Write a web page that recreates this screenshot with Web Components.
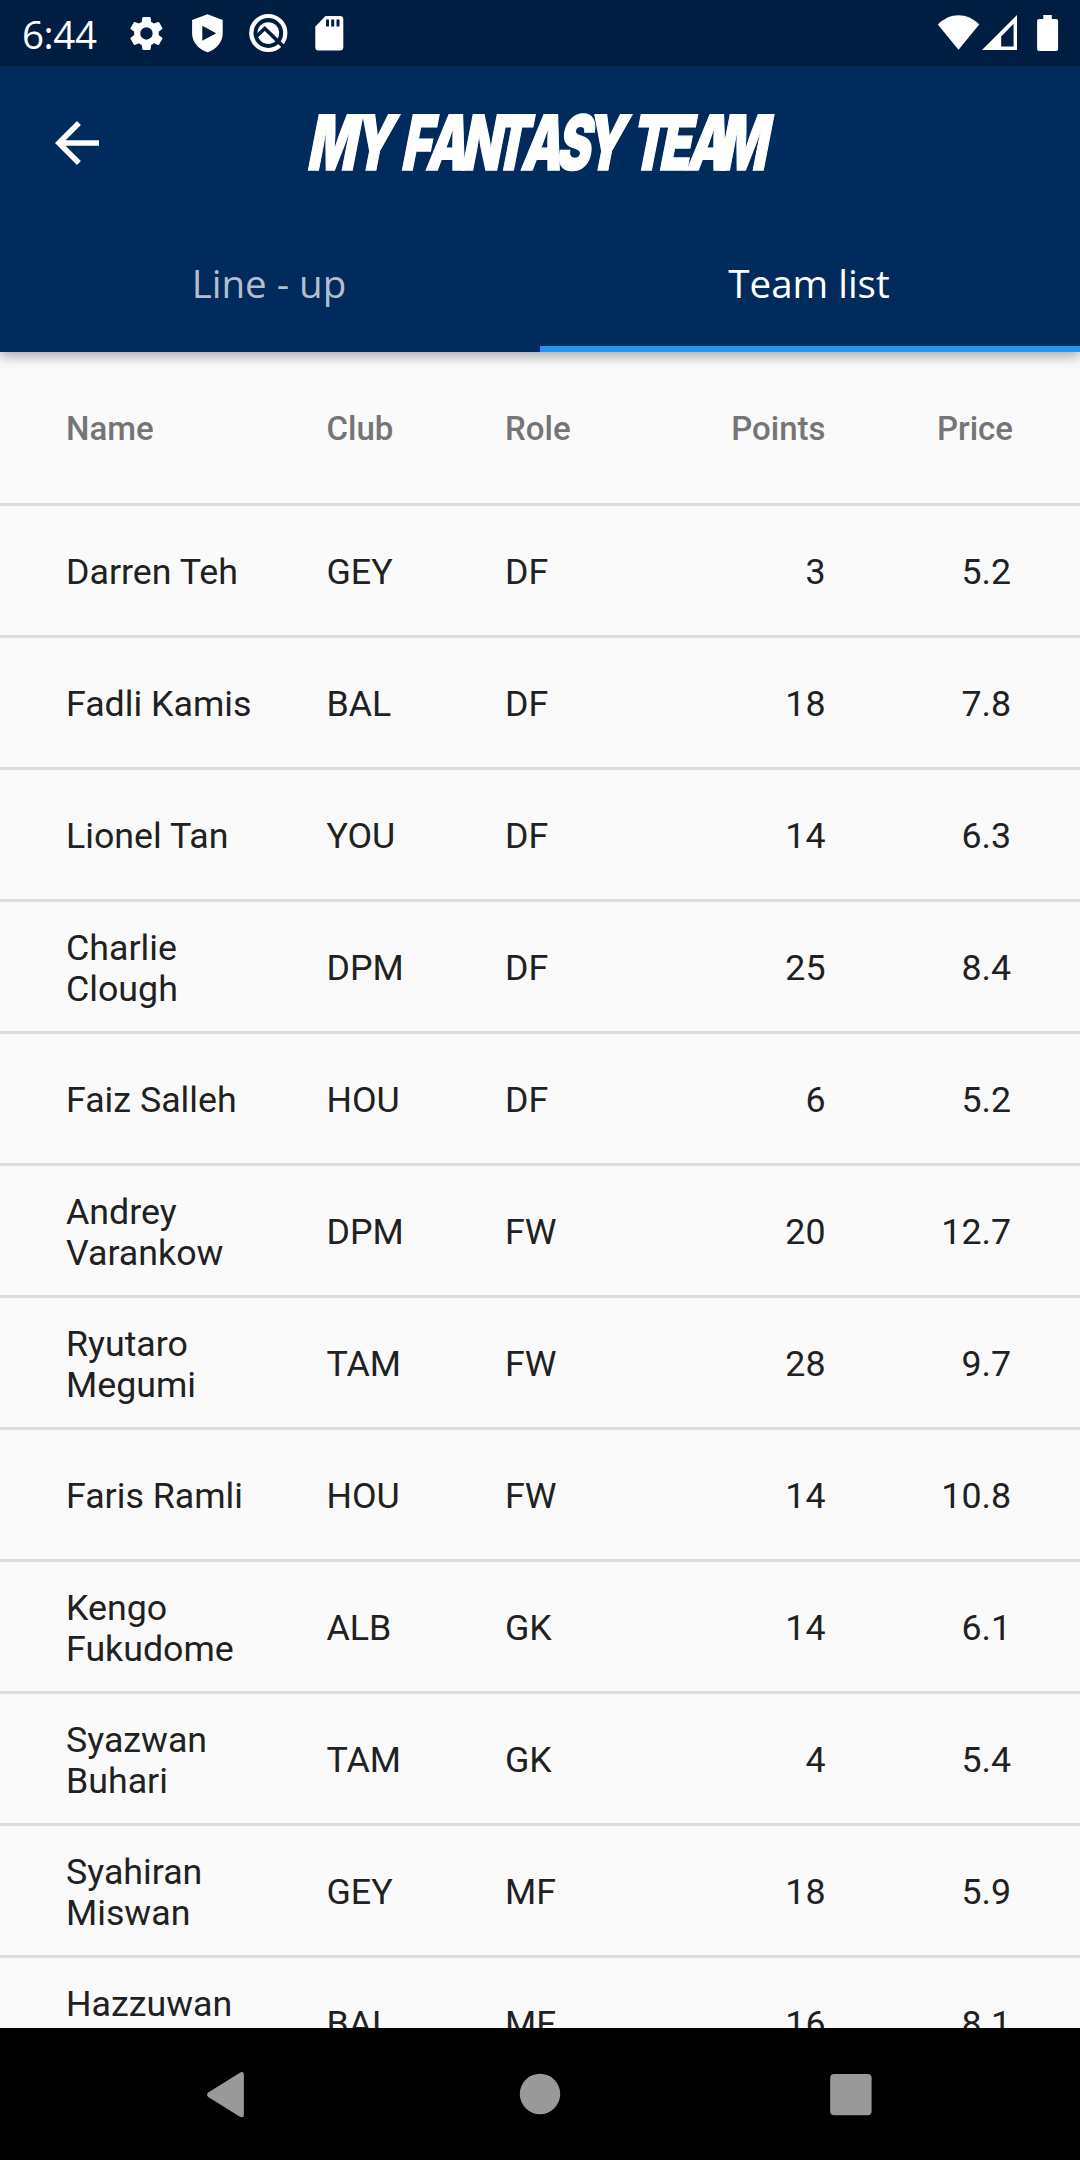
<!DOCTYPE html>
<html lang="en">
<head>
<meta charset="utf-8">
<title>My Fantasy Team</title>
<style>
html,body{margin:0;background:#000}
body{width:1080px;height:2160px;overflow:hidden}
</style>
</head>
<body>
<fantasy-app></fantasy-app>
<script>
function define(name, html, after) {
  const t = document.createElement('template');
  t.innerHTML = html;
  customElements.define(name, class extends HTMLElement {
    constructor() {
      super();
      this.attachShadow({mode: 'open'}).append(t.content.cloneNode(true));
    }
    connectedCallback() { if (after) after(this, this.shadowRoot); }
  });
}

define('status-bar', `
<style>
:host{display:flex;height:66px;background:#001e42;color:#fff;align-items:flex-start;box-sizing:border-box;padding:0 20px 0 22px}
.time{font:38.5px/68px "Open Sans",sans-serif;letter-spacing:-.4px;width:106px;white-space:nowrap}
svg{display:block;height:66px;fill:#fff;flex:none}
.gap{flex:1}
</style>
<span class="time">6:44</span>
<svg width="60" viewBox="128 0 60 66"><path transform="translate(125.8 12.8) scale(1.72)" d="M19.14 12.94c.04-.3.06-.61.06-.94s-.02-.64-.07-.94l2.03-1.58a.49.49 0 0 0 .12-.61l-1.92-3.32a.49.49 0 0 0-.59-.22l-2.39.96a7 7 0 0 0-1.62-.94l-.36-2.54a.48.48 0 0 0-.48-.41h-3.84a.48.48 0 0 0-.47.41l-.36 2.54c-.59.24-1.13.57-1.62.94l-2.39-.96a.48.48 0 0 0-.59.22L2.74 8.87a.48.48 0 0 0 .12.61l2.03 1.58a5.8 5.8 0 0 0 0 1.88l-2.03 1.58a.49.49 0 0 0-.12.61l1.92 3.32c.12.22.37.29.59.22l2.39-.96c.5.38 1.03.7 1.62.94l.36 2.54c.05.24.24.41.48.41h3.84c.24 0 .44-.17.47-.41l.36-2.54a7 7 0 0 0 1.62-.94l2.39.96c.22.08.47 0 .59-.22l1.92-3.32a.48.48 0 0 0-.12-.61zM12 15.6a3.6 3.6 0 1 1 0-7.2 3.6 3.6 0 0 1 0 7.2z"/></svg>
<svg width="60" viewBox="188 0 60 66"><path fill-rule="evenodd" d="M207.5 14.3 222.7 20v13.5c0 8.5-6 15.5-15.2 18.8-9.2-3.3-15.4-10.3-15.4-18.8V20zM202.3 25.8v15L216.2 33.3z"/></svg>
<svg width="60" viewBox="248 0 60 66"><circle cx="268.3" cy="33" r="17" fill="none" stroke="#fff" stroke-width="4.2"/><circle cx="268.3" cy="33" r="10.8"/><path d="M256.5 36.3 264.8 28.4 284.5 47.6" fill="none" stroke="#001e42" stroke-width="3.6"/><path d="M259.4 38.6l5.4-5.4 8.8 8.8c-5.2 3-12 1.4-14.2-3.4z"/></svg>
<svg width="60" viewBox="308 0 60 66"><path fill-rule="evenodd" d="M325.5 16H340a3.3 3.3 0 0 1 3.3 3.3v28a3.3 3.3 0 0 1-3.3 3.3h-21.4a3.3 3.3 0 0 1-3.3-3.3V26.5zM326 19.4v7h3v-7zM331.2 19.4v7h3v-7zM336.5 19.4v7h3v-7z"/></svg>
<span class="gap"></span>
<svg width="130" viewBox="930 0 130 66"><path d="M958.5 49.8 937.8 24.6c12-12.4 29.4-12.4 41.4 0z"/><path fill-rule="evenodd" d="M1017 15v35h-35zM1013.6 23.8 1001.2 36.5v9.9h12.4z"/><path d="M1043.3 15h8.5v4h4.3q2 0 2 2v28q0 2-2 2h-17q-2 0-2-2V21q0-2 2-2h4.2z"/></svg>
`);

define('app-header', `
<style>
:host{display:grid;grid-template-columns:154px 772px 154px;height:154px;background:#002b5c;align-items:center;position:relative;z-index:2}
svg{display:block}
.back{margin-left:44px}
text{font-family:Inter,sans-serif;font-weight:900;font-size:76px;fill:#fff;stroke:#fff;stroke-width:1.4px}
</style>
<svg class="back" width="66" height="66" viewBox="0 0 24 24" fill="#fff"><path d="M20 11H7.83l5.59-5.59L12 4l-8 8 8 8 1.41-1.41L7.83 13H20z"/></svg>
<svg width="772" height="154" viewBox="154 66 772 154"><text transform="translate(0 170) skewX(-11) scale(.67 1)"></text></svg>
`, (host, root) => {
  const t = root.querySelector('text');
  t.textContent = host.getAttribute('label');
  const pen = [306, 351, 385, 400, 425, 460, 491, 520, 555, 583, 615, 629, 658, 686, 717];
  t.setAttribute('x', pen.map(v => (v / .67).toFixed(1)).join(' '));
});

define('tab-item', `
<style>
:host{display:flex;flex:none;width:540px;height:132px;box-sizing:border-box;padding:0 2px 6px 0;justify-content:center;align-items:center;font:38.5px/54px "Open Sans",sans-serif;color:#b2bfce;border-bottom:0 solid #2196f3}
:host([selected]){color:#fff;padding-bottom:0;border-bottom-width:6px}
</style><slot></slot>`);

define('tab-strip', `
<style>:host{display:flex;background:#002b5c;height:132px;box-shadow:0 5px 11px rgba(0,0,0,.3);position:relative;z-index:1}</style><slot></slot>`);

const columns = 'display:grid;grid-template-columns:260.5px 178.5px 100px 220.5px 187.5px;box-sizing:border-box;align-items:center;border-bottom:3px solid #dedede;font-family:Roboto,sans-serif;';
const cells = '<span class="name"></span><span></span><span></span><span class="num"></span><span class="num"></span>';
const fill = (host, root) => {
  const spans = root.querySelectorAll('span');
  host.getAttribute('cells').split('|').forEach((v, i) => spans[i].textContent = v);
};
define('table-head', `<style>:host{${columns}height:154px;padding:2px 67px 0 66px;font-size:33px;font-weight:500;line-height:39px;color:#757575}.num{text-align:right}</style>${cells}`, fill);
define('player-row', `<style>:host{${columns}height:132px;padding:3px 67px 0 66px;font-size:35.75px;line-height:41px;color:#212121}.name{padding:1px 65px 0 0}.num{text-align:right}.num:last-child{padding-right:2px}</style>${cells}`, fill);

define('player-table', `
<style>:host{display:block;height:1676px;background:#fafafa;overflow:hidden}</style>
<table-head cells="Name|Club|Role|Points|Price"></table-head><div></div>`, (host, root) => {
  const box = root.querySelector('div');
  for (const row of [
    'Darren Teh|GEY|DF|3|5.2','Fadli Kamis|BAL|DF|18|7.8','Lionel Tan|YOU|DF|14|6.3',
    'Charlie Clough|DPM|DF|25|8.4','Faiz Salleh|HOU|DF|6|5.2','Andrey Varankow|DPM|FW|20|12.7',
    'Ryutaro Megumi|TAM|FW|28|9.7','Faris Ramli|HOU|FW|14|10.8','Kengo Fukudome|ALB|GK|14|6.1',
    'Syazwan Buhari|TAM|GK|4|5.4','Syahiran Miswan|GEY|MF|18|5.9','Hazzuwan Halim|BAL|MF|16|8.1']) {
    const el = document.createElement('player-row');
    el.setAttribute('cells', row);
    box.append(el);
  }
});

define('nav-bar', `
<style>:host{display:flex;height:132px;background:#000;justify-content:center;gap:245px;align-items:center}svg{display:block;width:66px;height:66px;fill:#999}</style>
<svg viewBox="0 0 66 66"><path d="M12.6 31.3 43.5 11.9Q47.9 9.6 47.9 14v39.6q0 4.2-4.4 2L12.6 36.2Q9.4 33.8 12.6 31.3z"/></svg>
<svg viewBox="0 0 66 66"><circle cx="33" cy="33" r="20.2"/></svg>
<svg viewBox="0 0 66 66"><rect x="12.2" y="13" width="41.4" height="41.2" rx="4"/></svg>`);

define('fantasy-app', `
<style>:host{display:flex;flex-direction:column;width:1080px;height:2160px;overflow:hidden}</style>
<status-bar></status-bar>
<app-header label="MY FANTASY TEAM"></app-header>
<tab-strip><tab-item>Line - up</tab-item><tab-item selected>Team list</tab-item></tab-strip>
<player-table></player-table>
<nav-bar></nav-bar>`);
</script>
</body>
</html>
